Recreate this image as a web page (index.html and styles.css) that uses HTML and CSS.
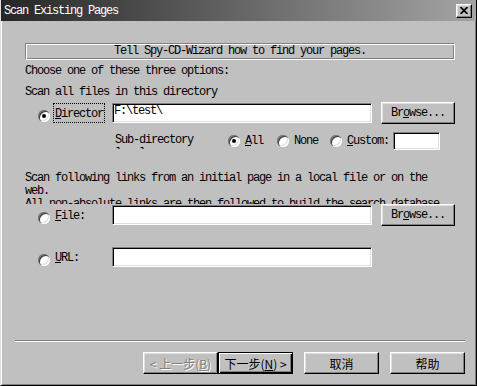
FILE: index.html
```html
<!DOCTYPE html>
<html>
  <head>
    <meta charset="utf-8">
    <link rel="stylesheet" href="styles.css">
  </head>
  <body>
    <div class="window">
      <div class="titlebar">
        <span class="title">Scan Existing Pages</span>
        <span class="close">
          <svg width="8" height="7" viewBox="0 0 8 7"><path d="M0.5 0 L7.5 7 M7.5 0 L0.5 7" stroke="#000" stroke-width="1.7"/></svg>
        </span>
      </div>

      <div class="client">
        <div class="banner">Tell Spy-CD-Wizard how to find your pages.</div>
        <p class="line choose">Choose one of these three options:</p>
        <p class="line scan-dir">Scan all files in this directory</p>

        <div class="row dir-row">
          <div class="choice">
            <span class="radio checked"></span>
            <span class="caption focused dir-caption"><u>D</u>irectory</span>
          </div>
          <div class="field">F:\test\</div>
          <div class="button">Br<u>o</u>wse...</div>
        </div>

        <div class="sub-row">
          <span class="sub-label">Sub-directory levels:</span>
          <span class="opt opt-all"><span class="radio checked"></span><u>A</u>ll</span>
          <span class="opt opt-none"><span class="radio"></span>None</span>
          <span class="opt opt-custom"><span class="radio"></span><u>C</u>ustom:</span>
          <span class="field small"></span>
        </div>

        <p class="note">Scan following links from an initial page in a local file or on the web.<br>All non-absolute links are then followed to build the search database</p>

        <div class="row file-row">
          <div class="choice">
            <span class="radio"></span>
            <span class="caption"><u>F</u>ile:</span>
          </div>
          <div class="field"></div>
          <div class="button">Br<u>o</u>wse...</div>
        </div>

        <div class="row url-row">
          <div class="choice">
            <span class="radio"></span>
            <span class="caption"><u>U</u>RL:</span>
          </div>
          <div class="field"></div>
        </div>
      </div>

      <div class="footer">
        <div class="separator"></div>
        <div class="buttons">
          <div class="button wide disabled">&lt; 上一步(<u>B</u>)</div>
          <div class="button wide default">下一步(<u>N</u>) &gt;</div>
          <div class="button wide gap">取消</div>
          <div class="button wide gap">帮助</div>
        </div>
      </div>
    </div>
  </body>
</html>
```

FILE: styles.css
```css
body {
  margin: 0;
  background: #c0c0c0;
  color: #000;
  font-family: "Liberation Mono", monospace;
  font-size: 12px;
  line-height: 13px;
  letter-spacing: -1.2px;
}

.window {
  width: 477px;
  height: 386px;
  box-sizing: border-box;
  display: flex;
  flex-direction: column;
  border-left: 1px solid #dfdfdf;
  border-right: 1px solid #000;
  border-bottom: 1px solid #000;
  box-shadow: inset 1px 0 #fff, inset -1px 0 #808080, inset 0 -1px #808080;
}

/* title bar */
.titlebar {
  height: 21px;
  flex-shrink: 0;
  display: flex;
  align-items: center;
  padding: 0 4px 0 3px;
  background: linear-gradient(to right, #262626, #a4a4a4);
  color: #fff;
}
.title { flex: 1; margin-top: 2px; white-space: nowrap; }
.close {
  width: 16px;
  height: 14px;
  box-sizing: border-box;
  display: flex;
  align-items: center;
  justify-content: center;
  background: #c0c0c0;
  border: 1px solid;
  border-color: #fff #000 #000 #fff;
  box-shadow: inset -1px -1px #808080, inset 1px 1px #dfdfdf;
}

/* dialog body */
.client {
  flex: 1;
  display: flex;
  flex-direction: column;
  padding: 22px 21px 0 24px;
}
.banner {
  height: 17px;
  box-sizing: border-box;
  padding-top: 1px;
  text-align: center;
  white-space: nowrap;
  border: 1px solid;
  border-color: #808080 #fff #fff #808080;
  box-shadow: inset 1px 1px #fff, inset -1px -1px #808080;
}
.line { margin: 0; white-space: nowrap; }
.choose { margin-top: 5px; }
.scan-dir { margin-top: 8px; }

.row {
  display: grid;
  grid-template-columns: 87px 269px 74px;
  align-items: center;
  height: 22px;
}
.dir-row { margin-top: 3px; }
.url-row { margin-top: 20px; }

.choice {
  display: flex;
  align-items: center;
  padding-left: 13px;
}
.choice .radio { margin: 5px 3px 0 0; }
.caption {
  height: 20px;
  box-sizing: border-box;
  padding: 4px 1px 0;
  border: 1px dotted transparent;
  white-space: nowrap;
  overflow: hidden;
}
.focused { border-color: #000; }
.dir-caption { width: 52px; }

.radio {
  position: relative;
  width: 12px;
  height: 12px;
  flex-shrink: 0;
  border-radius: 50%;
  background: #fff;
  box-shadow: inset 1px 1px #808080, inset 2px 2px #404040, inset -1px -1px #fff, inset -2px -2px #dfdfdf;
}
.radio.checked::after {
  content: "";
  position: absolute;
  left: 4px;
  top: 4px;
  width: 4px;
  height: 4px;
  border-radius: 50%;
  background: #000;
}

.field {
  width: 260px;
  height: 20px;
  box-sizing: border-box;
  padding: 1px 1px 0;
  background: #fff;
  white-space: nowrap;
  overflow: hidden;
  border: 1px solid;
  border-color: #808080 #fff #fff #808080;
  box-shadow: inset 1px 1px #000, inset -1px -1px #dfdfdf;
}
.field.small { width: 47px; height: 18px; }

.button {
  height: 22px;
  box-sizing: border-box;
  display: flex;
  align-items: center;
  justify-content: center;
  white-space: nowrap;
  background: #c0c0c0;
  border: 1px solid;
  border-color: #fff #000 #000 #fff;
  box-shadow: inset -1px -1px #808080, inset 1px 1px #dfdfdf;
}

/* sub-directory options */
.sub-row {
  display: flex;
  align-items: center;
  height: 18px;
  margin-top: 8px;
  padding-left: 90px;
}
.sub-label {
  width: 113px;
  height: 15px;
  flex-shrink: 0;
  align-self: flex-start;
  margin-top: 2px;
  overflow: hidden;
}
.opt { display: flex; align-items: center; white-space: nowrap; flex-shrink: 0; }
.opt .radio { margin-right: 5px; }
.opt-all { width: 49px; }
.opt-none { width: 53px; }
.opt-custom { width: 63px; }

.note {
  margin: 22px 0 0;
  height: 32px;
  overflow: hidden;
}

/* footer */
.footer { padding: 0 11px 11px 14px; }
.separator {
  border-top: 1px solid #808080;
  border-bottom: 1px solid #fff;
  margin-bottom: 10px;
}
.buttons { display: flex; justify-content: flex-end; }
.button.wide {
  width: 75px;
  font-family: "Noto Sans CJK SC", sans-serif;
  font-size: 12px;
  letter-spacing: 0;
}
.button.gap { margin-left: 11px; }
.button.disabled { color: #808080; text-shadow: 1px 1px #fff; }
.button.default {
  border-color: #000;
  box-shadow: inset 1px 1px #fff, inset -1px -1px #000, inset -2px -2px #808080;
}
```
